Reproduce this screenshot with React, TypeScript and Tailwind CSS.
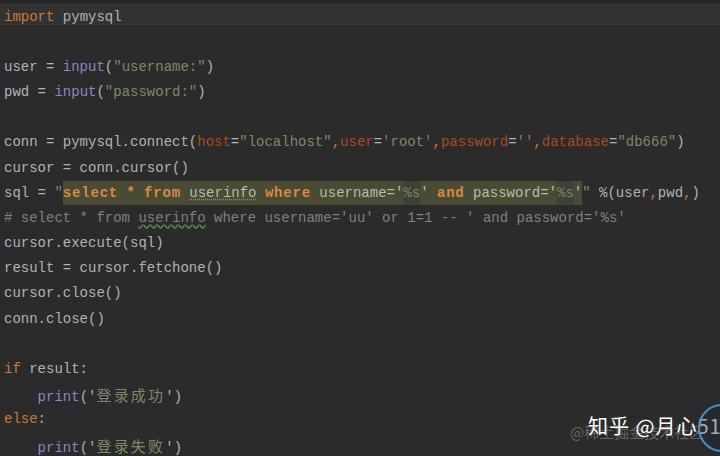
import React from 'react';

type Tok = { t: string; c?: string };

const KW = 'text-[#cc7832]';
const TX = 'text-[#aeb3b8]';
const ST = 'text-[#7a8a68]';
const BI = 'text-[#8888c6]';
const KA = 'text-[#aa4926]';
const CM = 'text-[#808080]';

const t = (text: string, c = TX): Tok => ({ t: text, c });

const lines: Tok[][] = [
  [],
  [t('user = '), t('input', BI), t('('), t('"username:"', ST), t(')')],
  [t('pwd = '), t('input', BI), t('('), t('"password:"', ST), t(')')],
  [],
  [
    t('conn = pymysql.connect('),
    t('host', KA), t('='), t('"localhost"', ST), t(',', KW),
    t('user', KA), t('='), t("'root'", ST), t(',', KW),
    t('password', KA), t('='), t("''", ST), t(',', KW),
    t('database', KA), t('='), t('"db666"', ST), t(')'),
  ],
  [t('cursor = conn.cursor()')],
  [], // sql line rendered separately
  [],
  [t('cursor.execute(sql)')],
  [t('result = cursor.fetchone()')],
  [t('cursor.close()')],
  [t('conn.close()')],
  [],
  [t('if', KW), t(' result:')],
  [t('    '), t('print', BI), t("('"), { t: '登录成功', c: 'cjk' }, t("')")],
  [t('else', KW), t(':')],
  [t('    '), t('print', BI), t("('"), { t: '登录失败', c: 'cjk' }, t("')")],
];

function Token({ tok }: { tok: Tok }) {
  if (tok.c === 'cjk') {
    return (
      <span className="text-[#7a8a68] text-[15px] tracking-[2.2px] font-['Noto_Sans_CJK_SC',sans-serif]">
        {tok.t}
      </span>
    );
  }
  return <span className={tok.c}>{tok.t}</span>;
}

function SqlLine() {
  const bold = 'font-bold tracking-[0.8px] text-[#d98a3e]';
  const hl = 'bg-[#4a4b35] text-[#b8bba8] py-[4px]';
  const ph = 'bg-[#3d4238] text-[#6f8a5e] py-[4px]';
  return (
    <>
      <span className={TX}>sql = </span>
      <span className={ST}>"</span>
      <span className={hl}>
        <span className={bold}>select</span> <span className={bold}>*</span>{' '}
        <span className={bold}>from</span>{' '}
        <span className="underline decoration-dotted decoration-[#8a8a7a] underline-offset-2">userinfo</span>{' '}
        <span className={bold}>where</span> username='
      </span>
      <span className={ph}>%s</span>
      <span className={hl}>
        ' <span className={bold}>and</span> password='
      </span>
      <span className={ph}>%s</span>
      <span className={hl}>'</span>
      <span className={ST}>"</span>
      <span className={TX}> %(user</span>
      <span className={KW}>,</span>
      <span className={TX}>pwd</span>
      <span className={KW}>,</span>
      <span className={TX}>)</span>
    </>
  );
}

function CommentLine() {
  return (
    <span className={CM}>
      # select * from{' '}
      <span className="underline decoration-wavy decoration-[#5f8a4a] underline-offset-2">userinfo</span> where
      username='uu' or 1=1 -- ' and password='%s'
    </span>
  );
}

export default function App() {
  return (
    <div className="relative w-[720px] h-[456px] overflow-hidden bg-[#2b2b2b] font-['Liberation_Mono',monospace] text-[14px] whitespace-pre">
      <div className="h-[3px] bg-[#262626]" />
      <div className="h-[22px] bg-[#323232] border-b border-[#3a3a3a] pl-[4px] leading-[28px]">
        <span className={KW}>import</span>
        <span className={TX}> pymysql</span>
      </div>
      <div className="mt-[4.6px] pl-[4px]">
        {lines.map((ln, i) => (
          <div key={i} className="h-[25.2px] leading-[25.2px]">
            {i === 6 ? <SqlLine /> : i === 7 ? <CommentLine /> : ln.map((tok, j) => <Token key={j} tok={tok} />)}
          </div>
        ))}
      </div>

      {/* watermarks */}
      <div className="absolute left-[570px] top-[420px] text-[15px] leading-[24px] text-[#8a8a8a]/60 font-['Noto_Sans_CJK_SC',sans-serif]">
        @稀土掘金技术社区
      </div>
      <div className="absolute left-[588px] top-[410px] text-[20px] leading-[32px] text-white font-['Noto_Sans_CJK_SC',sans-serif] tracking-[1px]">
        知乎 @月心51
      </div>
      <div className="absolute left-[698px] top-[404px] w-[50px] h-[48px] rounded-full border-[2px] border-[#4a8ccc] bg-[#1e2a36]/40" />
    </div>
  );
}
